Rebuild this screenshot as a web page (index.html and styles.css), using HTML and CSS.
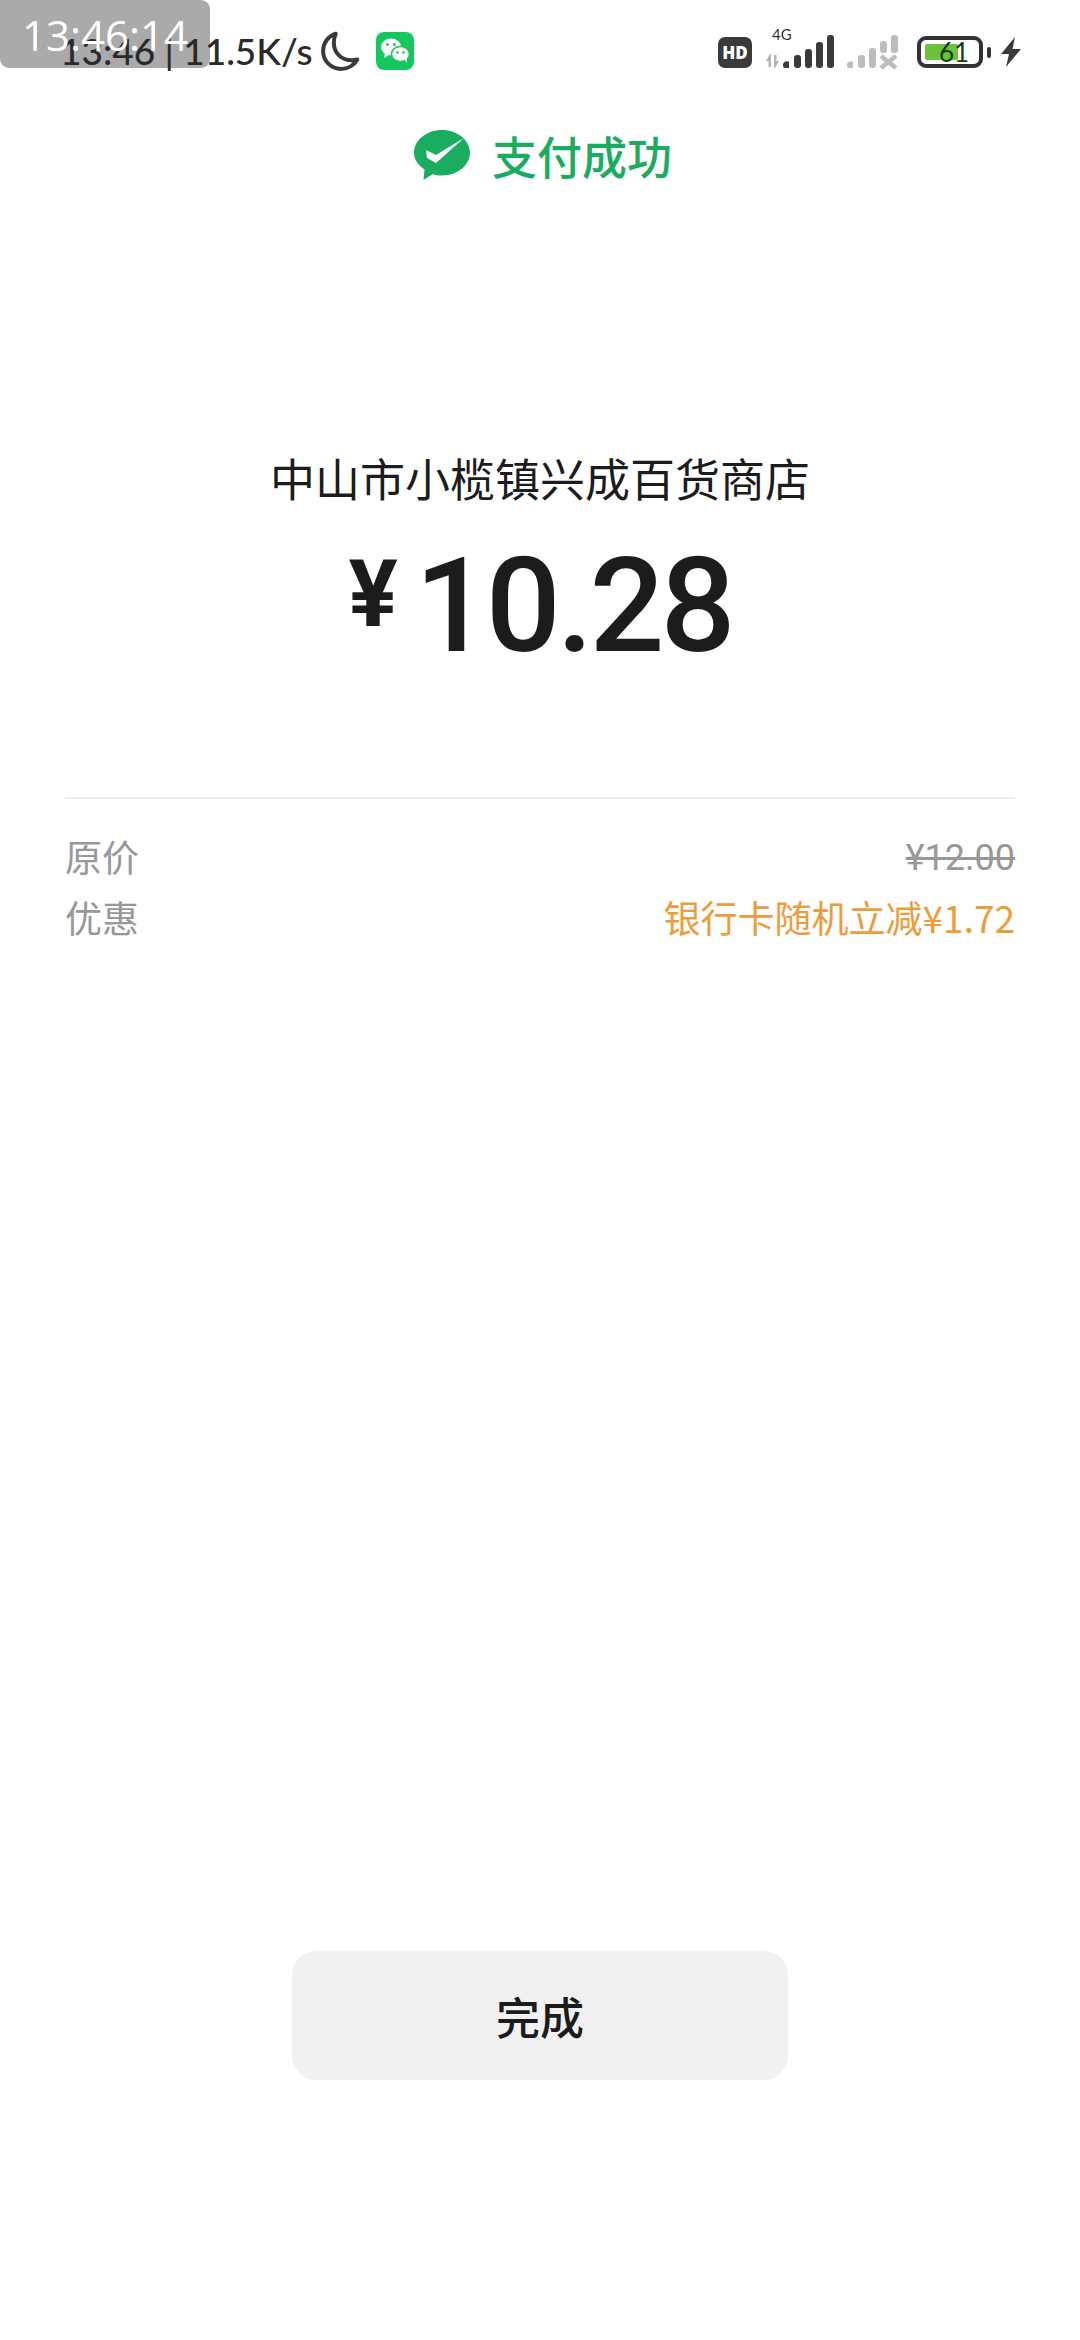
FILE: index.html
```html
<!DOCTYPE html>
<html lang="zh-CN">

<head>
    <meta charset="UTF-8">
    <meta name="viewport" content="width=device-width, initial-scale=1.0">
    <title>支付成功</title>
    <link rel="stylesheet" href="styles.css">
</head>

<body>

    <div class="page">
        <!-- Screen recorder timer: the plate sits under the status bar, its digits over it -->
        <div class="timer-plate"></div>
        <div class="timer">13:46:14</div>

        <!-- Status bar -->
        <div class="status-bar">
            <div class="status-left">
                <span class="status-text">13:46 | 11.5K/s</span>
                <svg class="moon" width="40" height="40" viewBox="0 0 38 38">
                    <path d="M14 2.500C6.500 5 2 11.500 2 19c0 9.500 7.500 17 17 17 6.500 0 12.500-3.500 15.500-9-1.500.5-3.500.8-5.500.8-9.500 0-16.800-7-16.800-16.300 0-3.300.8-6.500 1.800-9z" fill="none" stroke="#3a3a3a" stroke-width="3.800" stroke-linejoin="round" />
                </svg>
                <svg class="app-icon" width="38" height="38" viewBox="0 0 38 38">
                    <rect width="38" height="38" rx="8" fill="#16c760" />
                    <ellipse cx="15" cy="15" rx="10" ry="8.500" fill="#fff" />
                    <path d="M9 21l-1 5 5-3z" fill="#fff" />
                    <ellipse cx="24.500" cy="22" rx="9" ry="7.500" fill="#fff" stroke="#16c760" stroke-width="1.500" />
                    <path d="M29 28l2 3-.5-5z" fill="#fff" />
                    <circle cx="11.500" cy="12.500" r="1.400" fill="#16c760" />
                    <circle cx="18.500" cy="12.500" r="1.400" fill="#16c760" />
                    <circle cx="21.500" cy="20.500" r="1.300" fill="#16c760" />
                    <circle cx="27.500" cy="20.500" r="1.300" fill="#16c760" />
                </svg>
            </div>
            <div class="status-right">
                <div class="hd-badge">HD</div>
                <div class="signal">
                    <span class="net-label">4G</span>
                    <svg width="72" height="34" viewBox="0 0 72 34">
                        <path d="M4 19l-4 7h2.500v6H5V19zM9 33l4-7h-2.500v-6H8v13z" fill="#b5b5b5" />
                        <path d="M23 33h-4a2 2 0 0 1-2-2v-2a4 4 0 0 1 6-2z" fill="#3a3a3a" />
                        <rect x="28" y="20" width="7" height="13" rx="3" fill="#3a3a3a" />
                        <rect x="39" y="14" width="7" height="19" rx="3" fill="#3a3a3a" />
                        <rect x="50" y="7" width="7" height="26" rx="3" fill="#3a3a3a" />
                        <rect x="61" y="0" width="7" height="33" rx="3" fill="#3a3a3a" />
                    </svg>
                </div>
                <svg class="signal-two" width="54" height="34" viewBox="0 0 54 34">
                    <path d="M7 33H3a2 2 0 0 1-2-2v-2a4 4 0 0 1 6-2z" fill="#bdbdbd" />
                    <rect x="12" y="20" width="7" height="13" rx="3" fill="#bdbdbd" />
                    <rect x="23" y="13" width="7" height="20" rx="3" fill="#bdbdbd" />
                    <rect x="34" y="6" width="7" height="12" rx="3" fill="#bdbdbd" />
                    <rect x="45" y="0" width="7" height="18" rx="3" fill="#bdbdbd" />
                    <path d="M35 21l15 12M50 21L35 33" stroke="#bdbdbd" stroke-width="4.500" />
                </svg>
                <div class="battery">
                    <div class="battery-body">
                        <div class="battery-fill"></div>
                        <span class="battery-num">61</span>
                    </div>
                    <div class="battery-cap"></div>
                </div>
                <svg class="bolt" width="22" height="30" viewBox="0 0 22 30">
                    <path d="M15 0L1 17h8L6 30l15-18h-8.500z" fill="#3a3a3a" />
                </svg>
            </div>
        </div>

        <!-- Title -->
        <div class="result-title">
            <svg width="56" height="50" viewBox="0 0 56 50">
                <path d="M28 0c15.500 0 28 10.200 28 22.800S43.500 45.500 28 45.500c-3.300 0-6.500-.5-9.400-1.300L9.500 50l1-10.500C3.900 35.300 0 29.400 0 22.800 0 10.200 12.500 0 28 0z" fill="#1aad5f" />
                <path d="M12 20l10 5L50 8 22 33l-9-5z" fill="#fff" />
            </svg>
            <span>支付成功</span>
        </div>

        <!-- Payment -->
        <div class="payee">中山市小榄镇兴成百货商店</div>
        <div class="amount">
            <span class="currency">¥</span>
            <span class="value">10.28</span>
        </div>

        <div class="details">
            <div class="detail-row">
                <span>原价</span>
                <span class="old-price">¥12.00</span>
            </div>
            <div class="detail-row">
                <span>优惠</span>
                <span class="discount">银行卡随机立减¥1.72</span>
            </div>
        </div>

        <button class="done-btn">完成</button>
    </div>

</body>

</html>
```

FILE: styles.css
```css
/* Page */
body {
    margin: 0;
    background: #ffffff;
    font-family: 'Noto Sans CJK SC', 'Noto Sans', sans-serif;
    color: #1c1c1c;
}

.page {
    position: relative;
    width: 1080px;
    height: 2340px;
    display: flex;
    flex-direction: column;
    align-items: center;
    overflow: hidden;
}

/* Screen recorder timer */
.timer-plate,
.timer {
    position: absolute;
    top: 0;
    left: 0;
    width: 210px;
    height: 68px;
}

.timer-plate {
    background: #aaaaaa;
    border-radius: 0 9px 9px 9px;
}

.timer {
    z-index: 2;
    line-height: 70px;
    text-align: center;
    font-family: 'Open Sans', sans-serif;
    font-size: 42px;
    color: #ffffff;
}

/* Status bar */
.status-bar {
    position: relative;
    z-index: 1;
    box-sizing: border-box;
    width: 100%;
    height: 104px;
    padding: 32px 58px 0 60px;
    display: flex;
    justify-content: space-between;
    align-items: flex-start;
}

.status-left {
    display: flex;
    align-items: center;
    height: 38px;
}

.status-text {
    font-family: 'Lato', sans-serif;
    font-size: 37px;
    font-weight: 500;
    color: #2a2a2a;
    line-height: 38px;
    white-space: nowrap;
}

.moon {
    margin-left: 8px;
}

.app-icon {
    margin-left: 15px;
}

.status-right {
    display: flex;
    align-items: center;
    height: 38px;
    margin-top: 1px;
}

.hd-badge {
    width: 34px;
    height: 31px;
    border-radius: 7px;
    background: #3a3a3a;
    color: #ffffff;
    font-family: 'Open Sans', sans-serif;
    font-weight: 800;
    font-size: 17px;
    line-height: 31px;
    text-align: center;
}

.signal {
    position: relative;
    margin-left: 14px;
    display: flex;
}

.net-label {
    position: absolute;
    top: -9px;
    left: 6px;
    font-family: 'Lato', sans-serif;
    font-size: 15px;
    line-height: 16px;
    color: #333333;
}

.signal-two {
    margin-left: 8px;
}

.battery {
    margin-left: 17px;
    display: flex;
    align-items: center;
}

.battery-body {
    position: relative;
    box-sizing: border-box;
    width: 66px;
    height: 32px;
    border: 4px solid #333333;
    border-radius: 9px;
}

.battery-fill {
    position: absolute;
    left: 4px;
    top: 4px;
    width: 33px;
    height: 16px;
    border-radius: 2px;
    background: #6cc23a;
}

.battery-num {
    position: absolute;
    left: 18px;
    top: -1px;
    font-family: 'Lato', sans-serif;
    font-size: 26px;
    line-height: 26px;
    color: #123d12;
}

.battery-cap {
    width: 4px;
    height: 11px;
    margin-left: 4px;
    border-radius: 2px;
    background: #333333;
}

.bolt {
    margin-left: 9px;
}

/* Result header */
.result-title {
    display: flex;
    align-items: center;
    gap: 22px;
    height: 50px;
    margin-top: 26px;
    padding-left: 6px;
    font-size: 45px;
    font-weight: 500;
    color: #1aad5f;
}

.payee {
    margin-top: 268px;
    font-size: 45px;
    line-height: 60px;
}

.amount {
    display: flex;
    align-items: flex-start;
    height: 130px;
    margin-top: 33px;
}

.currency {
    margin-top: 9px;
    margin-right: 17px;
    font-family: 'Roboto', sans-serif;
    font-weight: 700;
    font-size: 92px;
    line-height: 90px;
}

.value {
    font-family: 'Roboto', sans-serif;
    font-weight: 500;
    font-size: 132px;
    line-height: 130px;
    letter-spacing: -4px;
}

/* Price details */
.details {
    box-sizing: border-box;
    width: 950px;
    margin-top: 126px;
    padding-top: 32px;
    border-top: 2px solid #eeeeee;
    display: flex;
    flex-direction: column;
    gap: 11px;
}

.detail-row {
    display: flex;
    justify-content: space-between;
    align-items: center;
    height: 50px;
    font-size: 37px;
    line-height: 50px;
    color: #989898;
}

.old-price {
    padding-top: 4px;
    font-family: 'Roboto', sans-serif;
    font-size: 36px;
    line-height: 46px;
    text-decoration: line-through;
}

.discount {
    color: #ec9c3d;
}

/* Done button */
.done-btn {
    width: 496px;
    height: 129px;
    margin-top: auto;
    margin-bottom: 260px;
    border: none;
    border-radius: 24px;
    background: #f1f1f1;
    color: #1c1c1c;
    font-family: inherit;
    font-size: 44px;
    font-weight: 500;
}
```
